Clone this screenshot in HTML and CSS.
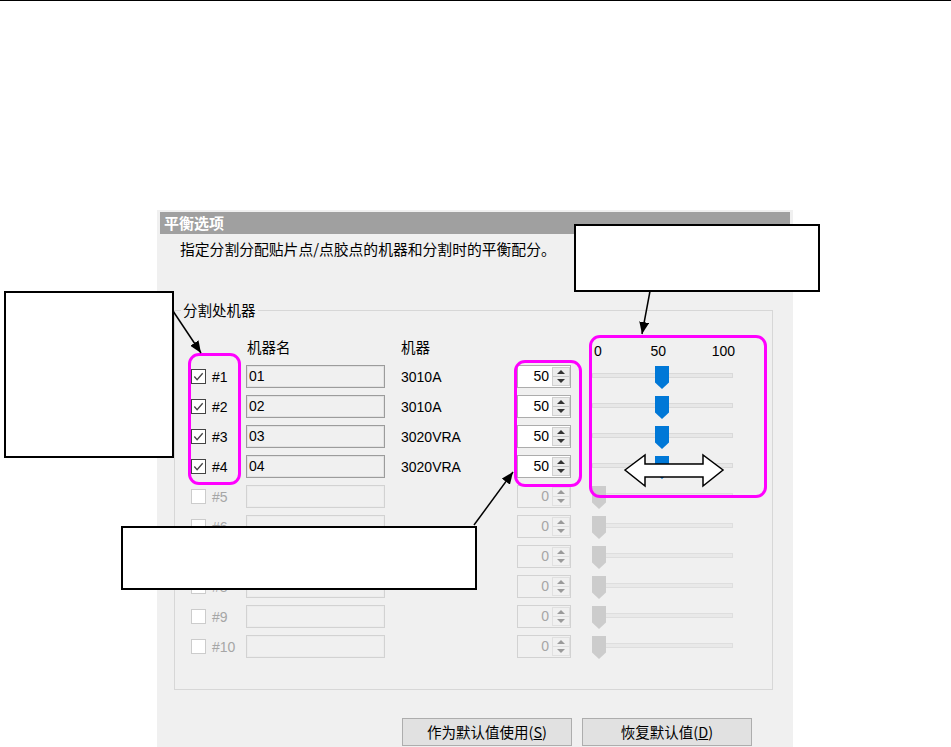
FILE: index.html
```html
<!DOCTYPE html>
<html lang="zh-CN">
<head>
<meta charset="utf-8">
<title>平衡选项</title>
<link rel="stylesheet" href="styles.css">
</head>
<body>
<div class="page">
  <div class="topline"></div>
  <div class="shot">
    <div class="hdr">平衡选项</div>
    <div class="desc">指定分割分配贴片点/点胶点的机器和分割时的平衡配分。</div>
    <div class="group">
      <div class="legend">分割处机器</div>
      <div class="row head">
        <span class="cb-space"></span>
        <span class="lbl"></span>
        <span class="fieldhead">机器名</span>
        <span class="type">机器</span>
        <span class="spin-space"></span>
        <span class="scale"><span class="s0">0</span><span class="s50">50</span><span class="s100">100</span></span>
      </div>
      <div class="rows">
        <div class="row">
          <span class="cb on"><svg viewBox="0 0 14 14"><polyline points="2.5,7 5.5,10.5 11.5,3.5"/></svg></span>
          <span class="lbl">#1</span>
          <span class="field">01</span>
          <span class="type">3010A</span>
          <span class="spin"><span class="val">50</span><span class="btns2"><span class="up"></span><span class="dn"></span></span></span>
          <span class="slider"><span class="track"></span><span class="thumb" style="left:63px"></span></span>
        </div>
        <div class="row">
          <span class="cb on"><svg viewBox="0 0 14 14"><polyline points="2.5,7 5.5,10.5 11.5,3.5"/></svg></span>
          <span class="lbl">#2</span>
          <span class="field">02</span>
          <span class="type">3010A</span>
          <span class="spin"><span class="val">50</span><span class="btns2"><span class="up"></span><span class="dn"></span></span></span>
          <span class="slider"><span class="track"></span><span class="thumb" style="left:63px"></span></span>
        </div>
        <div class="row">
          <span class="cb on"><svg viewBox="0 0 14 14"><polyline points="2.5,7 5.5,10.5 11.5,3.5"/></svg></span>
          <span class="lbl">#3</span>
          <span class="field">03</span>
          <span class="type">3020VRA</span>
          <span class="spin"><span class="val">50</span><span class="btns2"><span class="up"></span><span class="dn"></span></span></span>
          <span class="slider"><span class="track"></span><span class="thumb" style="left:63px"></span></span>
        </div>
        <div class="row">
          <span class="cb on"><svg viewBox="0 0 14 14"><polyline points="2.5,7 5.5,10.5 11.5,3.5"/></svg></span>
          <span class="lbl">#4</span>
          <span class="field">04</span>
          <span class="type">3020VRA</span>
          <span class="spin"><span class="val">50</span><span class="btns2"><span class="up"></span><span class="dn"></span></span></span>
          <span class="slider"><span class="track"></span><span class="thumb" style="left:63px"></span></span>
        </div>
        <div class="row off">
          <span class="cb"></span><span class="lbl">#5</span><span class="field"></span><span class="type"></span>
          <span class="spin"><span class="val">0</span><span class="btns2"><span class="up"></span><span class="dn"></span></span></span>
          <span class="slider"><span class="track"></span><span class="thumb" style="left:0"></span></span>
        </div>
        <div class="row off">
          <span class="cb"></span><span class="lbl">#6</span><span class="field"></span><span class="type"></span>
          <span class="spin"><span class="val">0</span><span class="btns2"><span class="up"></span><span class="dn"></span></span></span>
          <span class="slider"><span class="track"></span><span class="thumb" style="left:0"></span></span>
        </div>
        <div class="row off">
          <span class="cb"></span><span class="lbl">#7</span><span class="field"></span><span class="type"></span>
          <span class="spin"><span class="val">0</span><span class="btns2"><span class="up"></span><span class="dn"></span></span></span>
          <span class="slider"><span class="track"></span><span class="thumb" style="left:0"></span></span>
        </div>
        <div class="row off">
          <span class="cb"></span><span class="lbl">#8</span><span class="field"></span><span class="type"></span>
          <span class="spin"><span class="val">0</span><span class="btns2"><span class="up"></span><span class="dn"></span></span></span>
          <span class="slider"><span class="track"></span><span class="thumb" style="left:0"></span></span>
        </div>
        <div class="row off">
          <span class="cb"></span><span class="lbl">#9</span><span class="field"></span><span class="type"></span>
          <span class="spin"><span class="val">0</span><span class="btns2"><span class="up"></span><span class="dn"></span></span></span>
          <span class="slider"><span class="track"></span><span class="thumb" style="left:0"></span></span>
        </div>
        <div class="row off">
          <span class="cb"></span><span class="lbl">#10</span><span class="field"></span><span class="type"></span>
          <span class="spin"><span class="val">0</span><span class="btns2"><span class="up"></span><span class="dn"></span></span></span>
          <span class="slider"><span class="track"></span><span class="thumb" style="left:0"></span></span>
        </div>
      </div>
    </div>
    <div class="buttons">
      <span class="btn">作为默认值使用(<u>S</u>)</span>
      <span class="btn">恢复默认值(<u>D</u>)</span>
    </div>
  </div>

  <div class="hl hl-cb"></div>
  <div class="hl hl-spin"></div>
  <div class="hl hl-slider"></div>

  <div class="note note-a"></div>
  <div class="note note-b"></div>
  <div class="note note-c"></div>

  <svg class="overlay" width="951" height="747" viewBox="0 0 951 747">
    <defs>
      <marker id="ah" markerUnits="userSpaceOnUse" markerWidth="12" markerHeight="10" refX="12" refY="5" orient="auto">
        <path d="M0,0 L12,5 L0,10 z" fill="#000"/>
      </marker>
    </defs>
    <line x1="173" y1="311" x2="201" y2="353" stroke="#000" stroke-width="1.5" marker-end="url(#ah)"/>
    <line x1="650" y1="291" x2="642" y2="334" stroke="#000" stroke-width="1.5" marker-end="url(#ah)"/>
    <line x1="474" y1="525" x2="513" y2="472" stroke="#000" stroke-width="1.5" marker-end="url(#ah)"/>
    <polygon points="625,470 645,455 645,464 703,464 703,455 723,470 703,486 703,477 645,477 645,486" fill="#fff" stroke="#000" stroke-width="1.5"/>
  </svg>
</div>
</body>
</html>
```

FILE: styles.css
```css
body {
  margin: 0;
  background: #fff;
  font-family: "Liberation Sans", "Noto Sans CJK SC", sans-serif;
  color: #000;
}

.page {
  position: relative;
  width: 951px;
  height: 747px;
  overflow: hidden;
}

.topline {
  height: 1px;
  background: #000;
}

.shot {
  margin: 209px 0 0 157px;
  width: 636px;
  height: 537px;
  background: #f0f0f0;
  padding: 2px 3px 0;
  box-sizing: border-box;
}

.hdr {
  height: 22px;
  background: #a0a0a0;
  color: #fff;
  font: bold 15px/22px "Noto Sans CJK SC", sans-serif;
  padding-left: 4px;
}

.desc {
  margin-top: 6px;
  padding-left: 20px;
  font: 14.8px/18px "Noto Sans CJK SC", sans-serif;
}

.group {
  margin: 52px 0 0 14px;
  width: 599px;
  height: 380px;
  border: 1px solid #d7d7d7;
  box-sizing: border-box;
}

.legend {
  width: fit-content;
  margin: -10px 0 0 6px;
  padding: 0 2px;
  background: #f0f0f0;
  font: 14.5px/18px "Noto Sans CJK SC", sans-serif;
}

.row {
  display: flex;
  align-items: center;
  height: 23px;
  padding-left: 16px;
  font-size: 14px;
}

.row.head {
  margin-top: 19px;
  height: 18px;
  font: 14.5px/18px "Noto Sans CJK SC", sans-serif;
}

.rows {
  margin-top: 9px;
  display: flex;
  flex-direction: column;
  gap: 7px;
}

.cb, .cb-space {
  width: 15px;
  height: 15px;
  margin-right: 6px;
  flex: none;
  box-sizing: border-box;
}

.cb {
  border: 1px solid #444;
  background: #fff;
}

.cb svg {
  display: block;
  width: 13px;
  height: 13px;
}

.cb polyline {
  fill: none;
  stroke: #444;
  stroke-width: 1.4;
}

.lbl {
  width: 34px;
  flex: none;
}

.field, .fieldhead {
  width: 139px;
  margin-right: 16px;
  flex: none;
  box-sizing: border-box;
}

.fieldhead {
  padding-left: 1px;
}

.field {
  height: 23px;
  border: 1px solid #9c9c9c;
  box-shadow: inset 0 0 0 1px #e2e2e2;
  background: #f0f0f0;
  padding-left: 2px;
  line-height: 21px;
}

.type {
  width: 116px;
  flex: none;
}

.spin, .spin-space {
  width: 54px;
  margin-right: 21px;
  flex: none;
  box-sizing: border-box;
}

.spin {
  height: 23px;
  display: flex;
  border: 1px solid #acacac;
  background: #fff;
}

.val {
  flex: 1;
  text-align: right;
  padding-right: 3px;
  line-height: 21px;
}

.btns2 {
  width: 18px;
  margin: 1px 0;
  border: 1px solid #d0d0d0;
  background: #ececec;
  box-sizing: border-box;
  display: flex;
  flex-direction: column;
}

.up, .dn {
  flex: 1;
  display: flex;
  align-items: center;
  justify-content: center;
}

.up {
  border-bottom: 1px solid #c8c8c8;
}

.up::after {
  content: "";
  border-left: 4px solid transparent;
  border-right: 4px solid transparent;
  border-bottom: 4px solid #333;
}

.dn::after {
  content: "";
  border-left: 4px solid transparent;
  border-right: 4px solid transparent;
  border-top: 4px solid #333;
}

.slider {
  position: relative;
  width: 141px;
  height: 23px;
  flex: none;
  display: flex;
  align-items: center;
}

.track {
  width: 100%;
  height: 5px;
  margin-top: -3px;
  background: #e7e7e7;
  border: 1px solid #d9d9d9;
  box-sizing: border-box;
}

.thumb {
  position: absolute;
  top: 1px;
  width: 14px;
  height: 23px;
  background: #0078d7;
  clip-path: polygon(0 0, 100% 0, 100% 72%, 50% 100%, 0 72%);
}

.scale {
  width: 141px;
  flex: none;
  display: flex;
  padding-top: 8px;
  padding-left: 2px;
  font: 14px/18px "Liberation Sans", sans-serif;
  white-space: nowrap;
}

.s0 { width: 63px; }
.s50 { width: 68px; }

.row.off .lbl { color: #a6a6a6; }
.row.off .cb { border-color: #cccccc; }
.row.off .field { border-color: #d2d2d2; box-shadow: inset 0 0 0 1px #ececec; }
.row.off .spin { border-color: #d2d2d2; background: #f0f0f0; }
.row.off .val { color: #a6a6a6; }
.row.off .btns2 { border-color: #e0e0e0; background: #f0f0f0; }
.row.off .up { border-bottom-color: #dedede; }
.row.off .up::after { border-bottom-color: #9a9a9a; }
.row.off .dn::after { border-top-color: #9a9a9a; }
.row.off .thumb { background: #cccccc; }
.row.off .track { background: #e9e9e9; border-color: #dedede; }

.buttons {
  margin-top: 28px;
  display: flex;
  justify-content: flex-end;
  gap: 10px;
  padding-right: 38px;
}

.btn {
  width: 170px;
  height: 28px;
  box-sizing: border-box;
  border: 1px solid #adadad;
  background: #e1e1e1;
  text-align: center;
  font: 14.5px/26px "Noto Sans CJK SC", sans-serif;
}

.btn u {
  text-decoration: underline;
}

.hl {
  position: absolute;
  border: 3px solid #ff00ff;
  border-radius: 11px;
  box-sizing: border-box;
}

.hl-cb { left: 188px; top: 353px; width: 53px; height: 132px; }
.hl-spin { left: 514px; top: 360px; width: 68px; height: 127px; }
.hl-slider { left: 589px; top: 335px; width: 178px; height: 163px; }

.note {
  position: absolute;
  background: #fff;
  border: 2px solid #000;
  box-sizing: border-box;
}

.note-a { left: 4px; top: 291px; width: 170px; height: 167px; }
.note-b { left: 574px; top: 224px; width: 246px; height: 68px; }
.note-c { left: 121px; top: 526px; width: 356px; height: 64px; }

.overlay {
  position: absolute;
  left: 0;
  top: 0;
  pointer-events: none;
}
```
